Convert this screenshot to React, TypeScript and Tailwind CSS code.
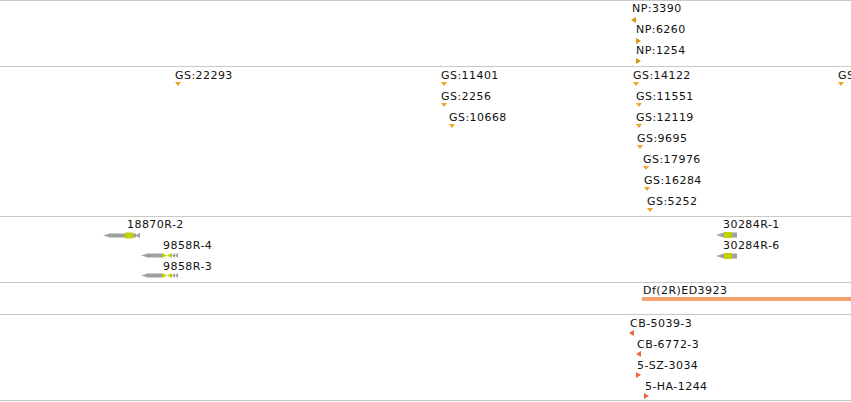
import React from "react";

type Dir = "down" | "left" | "right";

const Tri = ({ x, y, dir, color }: { x: number; y: number; dir: Dir; color: string }) => {
  if (dir === "down") {
    return (
      <svg className="absolute" style={{ left: x, top: y }} width={6} height={4} viewBox="0 0 6 4">
        <polygon points="0,0 6,0 3,4" fill={color} />
      </svg>
    );
  }
  return (
    <svg className="absolute" style={{ left: x, top: y }} width={5} height={6} viewBox="0 0 5 6">
      {dir === "left" ? (
        <polygon points="5,0 5,6 0,3" fill={color} />
      ) : (
        <polygon points="0,0 0,6 5,3" fill={color} />
      )}
    </svg>
  );
};

const Label = ({ x, y, text }: { x: number; y: number; text: string }) => (
  <div
    className="absolute whitespace-nowrap text-[11px] leading-[13px] tracking-[0.45px] text-[#111]"
    style={{ left: x, top: y }}
  >
    {text}
  </div>
);

const Line = () => <div className="h-px w-full bg-[#c8c8c8]" />;

const GRAY = "#a0a0a0";
const YEL = "#c2d400";

const np = [
  { t: "NP:3390", x: 632, y: 1, tx: 631, ty: 16, d: "left" as Dir },
  { t: "NP:6260", x: 636, y: 22, tx: 636, ty: 37, d: "right" as Dir },
  { t: "NP:1254", x: 636, y: 43, tx: 636, ty: 57, d: "right" as Dir },
];

const gs = [
  { t: "GS:22293", x: 175, r: 0 },
  { t: "GS:11401", x: 441, r: 0 },
  { t: "GS:2256", x: 441, r: 1 },
  { t: "GS:10668", x: 449, r: 2 },
  { t: "GS:14122", x: 633, r: 0 },
  { t: "GS:11551", x: 636, r: 1 },
  { t: "GS:12119", x: 636, r: 2 },
  { t: "GS:9695", x: 637, r: 3 },
  { t: "GS:17976", x: 643, r: 4 },
  { t: "GS:16284", x: 644, r: 5 },
  { t: "GS:5252", x: 647, r: 6 },
  { t: "GS:11111", x: 838, r: 0 },
];

const cb = [
  { t: "CB-5039-3", x: 630, tx: 629, d: "left" as Dir },
  { t: "CB-6772-3", x: 637, tx: 636, d: "left" as Dir },
  { t: "5-SZ-3034", x: 637, tx: 636, d: "right" as Dir },
  { t: "5-HA-1244", x: 645, tx: 644, d: "right" as Dir },
];

const SmallGene = ({ x, y }: { x: number; y: number }) => (
  <svg className="absolute" style={{ left: x, top: y }} width={38} height={5} viewBox="0 0 38 5">
    <polygon points="0,2.5 7,0.5 7,4.5" fill={GRAY} />
    <rect x={6} y={0.5} width={15} height={4} fill={GRAY} />
    <polygon points="21,0 26,2.5 21,5" fill={YEL} />
    <polygon points="31,0 26,2.5 31,5" fill={YEL} />
    <polygon points="31,2.5 34,0 34,5" fill={GRAY} />
    <polygon points="34,2.5 37,0 37,5" fill={GRAY} />
  </svg>
);

const ShortGene = ({ x, y }: { x: number; y: number }) => (
  <svg className="absolute" style={{ left: x, top: y }} width={22} height={6} viewBox="0 0 22 6">
    <polygon points="0,3 8,0.5 8,5.5" fill={GRAY} />
    <rect x={8} y={0} width={8} height={6} fill={YEL} />
    <rect x={16} y={0.5} width={5} height={5} fill={GRAY} />
  </svg>
);

export default function App() {
  return (
    <div className="relative h-[402px] w-[851px] overflow-hidden bg-white font-['DejaVu_Sans',sans-serif]">
      <Line />
      {/* NP track */}
      <div className="relative h-[65px]">
        {np.map((f) => (
          <React.Fragment key={f.t}>
            <Label x={f.x} y={f.y} text={f.t} />
            <Tri x={f.tx} y={f.ty} dir={f.d} color="#d4960c" />
          </React.Fragment>
        ))}
      </div>
      <Line />
      {/* GS track */}
      <div className="relative h-[149px]">
        {gs.map((f) => (
          <React.Fragment key={f.t}>
            <Label x={f.x} y={2 + f.r * 21} text={f.t} />
            <Tri x={f.x} y={15 + f.r * 21} dir="down" color="#f0a22a" />
          </React.Fragment>
        ))}
      </div>
      <Line />
      {/* Gene track */}
      <div className="relative h-[65px]">
        <Label x={127} y={1} text="18870R-2" />
        <svg className="absolute" style={{ left: 103, top: 15 }} width={38} height={7} viewBox="0 0 38 7">
          <polygon points="0,3.5 7,1.5 7,5.5" fill={GRAY} />
          <rect x={6} y={1.5} width={16} height={4} fill={GRAY} />
          <rect x={22} y={0.5} width={8} height={6} fill={YEL} />
          <rect x={30} y={1.5} width={3} height={4} fill={GRAY} />
          <polygon points="32,3.5 37,1 37,6" fill={GRAY} />
        </svg>
        <Label x={163} y={22} text="9858R-4" />
        <SmallGene x={141} y={36} />
        <Label x={163} y={43} text="9858R-3" />
        <SmallGene x={141} y={56} />
        <Label x={723} y={1} text="30284R-1" />
        <ShortGene x={716} y={15} />
        <Label x={723} y={22} text="30284R-6" />
        <ShortGene x={716} y={36} />
      </div>
      <Line />
      {/* Deficiency track */}
      <div className="relative h-[31px]">
        <Label x={643} y={1} text="Df(2R)ED3923" />
        <div className="absolute left-[642px] top-[14px] h-[4px] w-[209px] bg-[#f4a070]" />
      </div>
      <Line />
      {/* CB track */}
      <div className="relative h-[85px]">
        {cb.map((f, i) => (
          <React.Fragment key={f.t}>
            <Label x={f.x} y={2 + i * 21} text={f.t} />
            <Tri x={f.tx} y={15 + i * 21} dir={f.d} color="#f2643e" />
          </React.Fragment>
        ))}
      </div>
      <Line />
    </div>
  );
}
